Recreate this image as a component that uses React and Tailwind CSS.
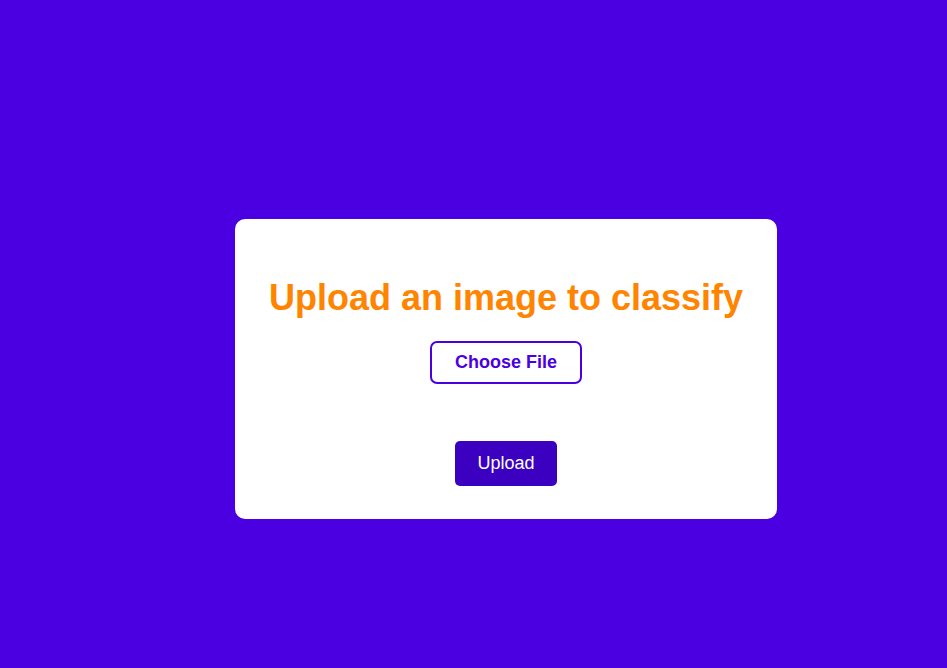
export default function App() {
  return (
    <div
      className="min-h-[668px] w-full bg-[#4a00e0] pt-[219px] pl-[235px]"
      style={{ fontFamily: '"Liberation Sans", Arial, sans-serif' }}
    >
      <div className="flex w-[542px] h-[300px] flex-col items-center rounded-[10px] bg-white pt-[58px]">
        <h1 className="m-0 text-[36px] font-bold leading-[41px] text-[#ff8400]">
          Upload an image to classify
        </h1>
        <label className="mt-[23px] flex h-[43px] w-[152px] cursor-pointer items-center justify-center rounded-[7px] border-2 border-[#4a00e0] text-[18px] font-bold leading-[21px] text-[#4a00e0]">
          Choose File
          <input type="file" className="hidden" />
        </label>
        <button className="mt-[57px] flex h-[45px] w-[102px] items-center justify-center rounded-[5px] bg-[#3c00c0] text-[18px] leading-[21px] text-white">
          Upload
        </button>
      </div>
    </div>
  );
}
